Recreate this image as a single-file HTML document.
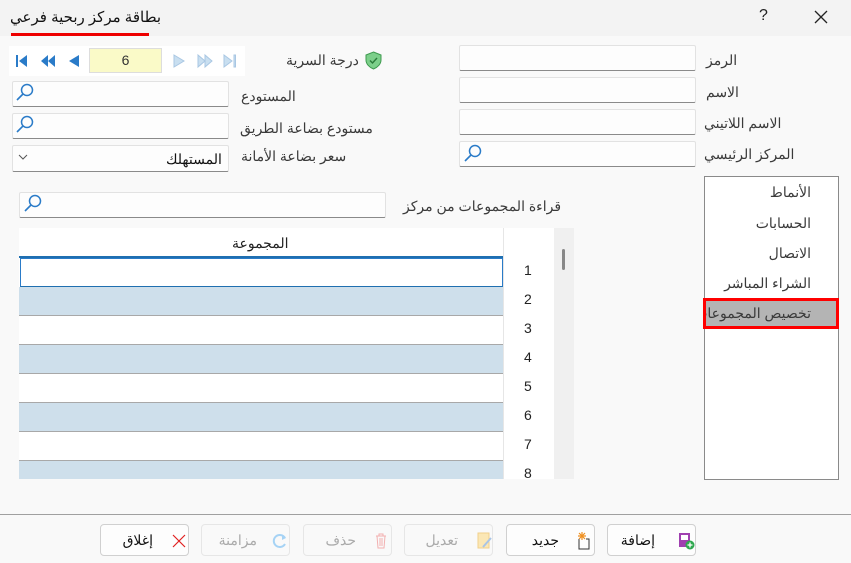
<!DOCTYPE html>
<html><head><meta charset="utf-8"><style>
*{box-sizing:border-box;margin:0;padding:0}
body{width:851px;height:563px;background:#f9f9f9;font-family:"Liberation Sans","Noto Sans CJK SC",sans-serif;font-size:14px;color:#333;position:relative;overflow:hidden}
.a{position:absolute}
.lbl{position:absolute;white-space:nowrap;direction:rtl;font-size:14px;color:#3a3a3a;line-height:18px}
.inp{position:absolute;background:#fdfdfd;border:1px solid #e2e2e2;border-bottom:1px solid #8a8a8a;border-radius:2px}
.btn{position:absolute;top:524px;height:32px;width:89px;border:1px solid #d0d0d0;border-radius:4px;background:#fdfdfd;font-size:14px;direction:rtl}
.btn span{position:absolute;top:7px;white-space:nowrap}
.dis{color:#aaa;border-color:#e6e6e6;background:#f9f9f9}
.row{position:absolute;left:19px;width:485px;height:29px;border-bottom:1px solid #a8a8a8}
.num{position:absolute;left:524px;font-size:14px;color:#222}
.item{position:absolute;right:28px;direction:rtl;font-size:14px;color:#3a3a3a;white-space:nowrap}
</style></head><body>
<div class="a" style="left:0;top:0;width:851px;height:36px;background:#f3f3f3"></div>
<div class="lbl" style="left:10px;top:9px;font-size:15px;color:#111">بطاقة مركز ربحية فرعي</div>
<div class="a" style="left:11px;top:33px;width:138px;height:3px;background:#e00"></div>
<div class="a" style="left:759px;top:7px;font-size:16px;color:#222">?</div>
<svg class="a" style="left:814px;top:10px" width="14" height="14"><path d="M1 1L13 13M13 1L1 13" stroke="#222" stroke-width="1.3"/></svg>

<div class="a" style="left:9px;top:46px;width:236px;height:30px;background:#fff"></div>
<svg class="a" style="left:14px;top:53px" width="230" height="16">
<g fill="#2a7bc8"><rect x="2" y="2" width="2" height="12"/><path d="M13 2L5 8L13 14Z"/><path d="M34 2L27 8L34 14Z M41 2L34 8L41 14Z"/><path d="M65 2L55 8L65 14Z"/></g>
<g fill="#c9dff0" stroke="#a9c7e3"><path d="M160 2L170 8L160 14Z"/><path d="M184 2L191 8L184 14Z M191 2L198 8L191 14Z"/><path d="M210 2L218 8L210 14Z"/><rect x="220" y="2" width="1.5" height="12"/></g>
</svg>
<div class="a" style="left:89px;top:48px;width:73px;height:25px;background:#fafac8;border:1px solid #ddd;text-align:center;line-height:23px;font-size:14px">6</div>
<div class="lbl" style="left:286px;top:51px">درجة السرية</div>
<svg class="a" style="left:364px;top:51px" width="19" height="19"><path d="M9.5 1L17 4V9C17 13 13.5 16.5 9.5 18C5.5 16.5 2 13 2 9V4Z" fill="#7ccf8a" stroke="#3e9a4f"/><path d="M6 9.5L8.5 12L13 7" stroke="#2a7a3a" stroke-width="1.4" fill="none"/></svg>

<div class="inp" style="left:459px;top:45px;width:237px;height:26px"></div>
<div class="inp" style="left:459px;top:77px;width:237px;height:26px"></div>
<div class="inp" style="left:459px;top:109px;width:237px;height:26px"></div>
<div class="inp" style="left:459px;top:141px;width:237px;height:26px"></div>
<div class="lbl" style="left:706px;top:51px">الرمز</div>
<div class="lbl" style="left:706px;top:83px">الاسم</div>
<div class="lbl" style="left:704px;top:114px">الاسم اللاتيني</div>
<div class="lbl" style="left:704px;top:145px">المركز الرئيسي</div>
<svg class="a" style="left:462px;top:143px" width="22" height="20"><circle cx="13" cy="8" r="5.5" fill="none" stroke="#2a7bc8" stroke-width="1.5"/><path d="M9 12L3 18" stroke="#2a7bc8" stroke-width="1.6"/></svg>

<div class="inp" style="left:12px;top:81px;width:217px;height:26px"></div>
<div class="inp" style="left:12px;top:113px;width:217px;height:26px"></div>
<div class="inp" style="left:12px;top:145px;width:217px;height:27px"></div>
<svg class="a" style="left:14px;top:82px" width="22" height="20"><circle cx="13" cy="8" r="5.5" fill="none" stroke="#2a7bc8" stroke-width="1.5"/><path d="M9 12L3 18" stroke="#2a7bc8" stroke-width="1.6"/></svg>
<svg class="a" style="left:14px;top:114px" width="22" height="20"><circle cx="13" cy="8" r="5.5" fill="none" stroke="#2a7bc8" stroke-width="1.5"/><path d="M9 12L3 18" stroke="#2a7bc8" stroke-width="1.6"/></svg>
<svg class="a" style="left:18px;top:154px" width="10" height="6"><path d="M1 1L5 5L9 1" stroke="#555" fill="none"/></svg>
<div class="lbl" style="left:166px;top:150px;color:#111">المستهلك</div>
<div class="lbl" style="left:241px;top:87px">المستودع</div>
<div class="lbl" style="left:240px;top:119px">مستودع بضاعة الطريق</div>
<div class="lbl" style="left:241px;top:147px">سعر بضاعة الأمانة</div>

<div class="lbl" style="left:403px;top:197px">قراءة المجموعات من مركز</div>
<div class="inp" style="left:19px;top:192px;width:367px;height:26px"></div>
<svg class="a" style="left:22px;top:193px" width="22" height="20"><circle cx="13" cy="8" r="5.5" fill="none" stroke="#2a7bc8" stroke-width="1.5"/><path d="M9 12L3 18" stroke="#2a7bc8" stroke-width="1.6"/></svg>

<div class="a" style="left:19px;top:228px;width:485px;height:251px;background:#fff"></div>
<div class="a" style="left:19px;top:256px;width:485px;height:2px;background:#1f6fb0"></div>
<div class="lbl" style="left:232px;top:234px;color:#222">المجموعة</div>
<div class="row" style="top:258px;background:#fff;border:1px solid #2a7bc8;border-bottom:1px solid #1f6fb0;width:483px;left:20px;height:29px"></div>
<div class="row" style="top:287px;background:#cedfeb"></div>
<div class="row" style="top:316px;background:#fff"></div>
<div class="row" style="top:345px;background:#cedfeb"></div>
<div class="row" style="top:374px;background:#fff"></div>
<div class="row" style="top:403px;background:#cedfeb"></div>
<div class="row" style="top:432px;background:#fff"></div>
<div class="row" style="top:461px;background:#cedfeb;height:18px;border-bottom:none"></div>
<div class="a" style="left:503px;top:228px;width:1px;height:251px;background:#e6e6e6"></div>
<div class="a" style="left:504px;top:228px;width:50px;height:251px;background:#fff"></div>
<div class="num" style="top:262px">1</div><div class="num" style="top:291px">2</div><div class="num" style="top:320px">3</div><div class="num" style="top:349px">4</div><div class="num" style="top:378px">5</div><div class="num" style="top:407px">6</div><div class="num" style="top:436px">7</div><div class="num" style="top:465px">8</div>
<div class="a" style="left:554px;top:228px;width:20px;height:251px;background:#f0f0f0"></div>
<div class="a" style="left:562px;top:249px;width:3px;height:21px;background:#888;border-radius:2px"></div>

<div class="a" style="left:704px;top:176px;width:135px;height:304px;background:#fff;border:1px solid #8a8a8a"></div>
<div class="a" style="left:703px;top:298px;width:136px;height:31px;background:#b4b4b4;border:3px solid #f00"></div>
<div class="a" style="left:706px;top:176px;width:131px;height:304px;overflow:hidden">
<div class="item" style="top:8px;right:26px">الأنماط</div>
<div class="item" style="top:39px;right:26px">الحسابات</div>
<div class="item" style="top:69px;right:26px">الاتصال</div>
<div class="item" style="top:99px;right:26px">الشراء المباشر</div>
<div class="item" style="top:129px;right:26px">تخصيص المجموعات</div>
</div>

<div class="a" style="left:0;top:514px;width:851px;height:1px;background:#a0a0a0"></div>

<div class="btn" style="left:100px"><span style="right:35px;color:#111">إغلاق</span><svg class="a" style="left:71px;top:9px" width="14" height="14"><path d="M1 1L13 13M13 1L1 13" stroke="#e02020" stroke-width="1.2"/></svg></div>
<div class="btn dis" style="left:201px"><span style="right:32px">مزامنة</span><svg class="a" style="left:70px;top:8px" width="16" height="16"><path d="M13 5A6 6 0 1 0 13 11" stroke="#a6d3f5" stroke-width="2" fill="none"/><path d="M10 2L14 5L10 7" fill="#a6d3f5"/></svg></div>
<div class="btn dis" style="left:303px"><span style="right:35px">حذف</span><svg class="a" style="left:70px;top:7px" width="14" height="18"><path d="M2 4H12M5 4V2H9V4M3 4L4 16H10L11 4M6 6V14M8 6V14" stroke="#f2b0b0" fill="none"/></svg></div>
<div class="btn dis" style="left:404px"><span style="right:34px">تعديل</span><svg class="a" style="left:72px;top:7px" width="16" height="18"><rect x="1" y="1" width="11" height="15" fill="#fbe7b5" stroke="#f1d08a"/><path d="M6 15L14 6" stroke="#a9c4e6" stroke-width="2"/></svg></div>
<div class="btn" style="left:506px"><span style="right:35px;color:#111">جديد</span><svg class="a" style="left:69px;top:6px" width="16" height="20"><path d="M3 8V18H13V8H10" stroke="#333" fill="none"/><path d="M6 1V9M2 5H10M3 2L9 8M9 2L3 8" stroke="#f09020" stroke-width="1.2"/></svg></div>
<div class="btn" style="left:607px"><span style="right:40px;color:#111">إضافة</span><svg class="a" style="left:70px;top:7px" width="18" height="18"><rect x="1" y="1" width="11" height="14" fill="#a040b0"/><rect x="3" y="3" width="7" height="5" fill="#fff"/><circle cx="12" cy="13" r="4.5" fill="#2fa84f"/><path d="M12 10.5V15.5M9.5 13H14.5" stroke="#fff" stroke-width="1.3"/></svg></div>
</body></html>
